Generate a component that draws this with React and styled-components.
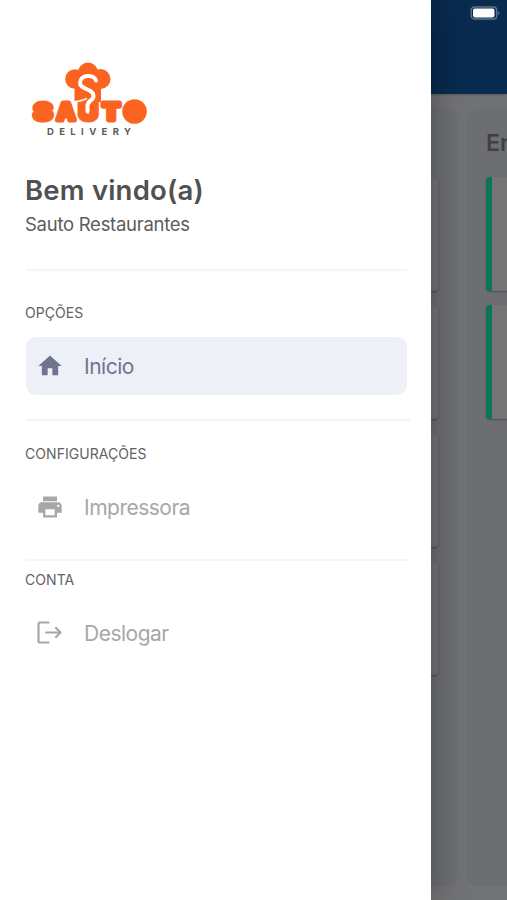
import React from "react";
import styled, { createGlobalStyle } from "styled-components";

const GlobalStyle = createGlobalStyle`
  * {
    box-sizing: border-box;
  }
  body {
    margin: 0;
    font-family: Inter, "Liberation Sans", sans-serif;
  }
`;

const ScreenStyles = styled.div`
  position: relative;
  display: flex;
  flex-direction: column;
  width: 507px;
  height: 900px;
  overflow: hidden;
  background-color: #717273;
`;

const BoardHeader = styled.header`
  display: flex;
  justify-content: flex-end;
  flex-shrink: 0;
  height: 94px;
  padding: 6px 7px;
  background-color: #082b4f;
  box-shadow: 0 1px 2px rgba(0, 0, 0, 0.2);
`;

const BoardStyles = styled.main`
  display: flex;
  flex: 1;
  gap: 10px;
  padding: 14px 0 14px 17px;
`;

const Column = styled.section`
  display: flex;
  flex-direction: column;
  flex-shrink: 0;
  gap: 13px;
  width: 440px;
  padding: 0 19px;
  border-radius: 10px;
  background-color: #6c6e72;
`;

const ColumnTitle = styled.h2`
  height: 41px;
  margin: 15px 0 0;
  font-size: 23px;
  line-height: 41px;
  font-weight: 600;
  color: #3f3f48;
`;

const CardList = styled.div`
  display: flex;
  flex-direction: column;
  gap: 14px;
`;

const Card = styled.article`
  height: 114px;
  border-left: 6px solid #0b7557;
  border-radius: 4px;
  background-color: #747474;
  box-shadow: 0 1px 2px rgba(0, 0, 0, 0.3);
`;

const DrawerStyles = styled.aside`
  position: absolute;
  top: 0;
  left: 0;
  width: 431px;
  height: 100%;
  padding: 50px 24px 0 26px;
  background-color: #fff;
  box-shadow: 0 0 32px rgba(0, 0, 0, 0.34);
  .logo {
    display: block;
    margin-left: -6px;
  }
`;

const Welcome = styled.h1`
  margin: 29px 0 0 -1px;
  font-size: 27.5px;
  line-height: 32px;
  font-weight: 600;
  letter-spacing: 0.2px;
  color: #515151;
`;

const Restaurant = styled.p`
  margin: 6px 0 0 -1px;
  font-size: 18.5px;
  line-height: 24px;
  letter-spacing: -0.27px;
  color: #5c5c5c;
`;

const MenuGroup = styled.section`
  width: ${(props) => props.$width || "381px"};
  margin-top: ${(props) => props.$top};
  padding-top: ${(props) => props.$inner};
  border-top: 2px solid #f5f5f6;
`;

const GroupTitle = styled.h3`
  margin: 0 0 0 -1px;
  font-size: 14px;
  line-height: 20px;
  font-weight: 400;
  letter-spacing: 0.05px;
  color: #626262;
`;

const MenuItem = styled.a`
  display: flex;
  align-items: center;
  gap: 20px;
  width: 381px;
  height: 58px;
  margin-top: 14px;
  padding-left: 10px;
  border-radius: 10px;
  font-size: 21px;
  letter-spacing: -0.5px;
  color: ${(props) => (props.$active ? "#70758e" : "#a7a7a7")};
  background-color: ${(props) => (props.$active ? "#eef0f7" : "transparent")};
  svg {
    flex-shrink: 0;
  }
`;

const letters = [
  { char: "S", x: 14, width: 18 },
  { char: "A", x: 37, width: 18 },
  { char: "U", x: 59, width: 18.5 },
  { char: "T", x: 82.5, width: 17.5 },
  { char: "O", x: 106, width: 17 },
];

const Logo = () => (
  <svg className="logo" width="140" height="95" viewBox="0 0 140 95">
    <g fill="#fb6420">
      <circle cx="68" cy="22.5" r="10" />
      <circle cx="55" cy="29" r="9.8" />
      <circle cx="80.5" cy="29" r="10" />
      <path d="M54.5 30H81V52H54.5Z" />
    </g>
    <g
      fill="#fb6420"
      stroke="#fb6420"
      strokeWidth="5"
      strokeLinejoin="round"
      fontFamily="Inter, sans-serif"
      fontWeight="800"
      fontSize="22.5"
    >
      {letters.map(({ char, x, width }) => (
        <text key={char} x={x} y="70.3" textLength={width} lengthAdjust="spacingAndGlyphs">
          {char}
        </text>
      ))}
    </g>
    <circle cx="114.5" cy="61.5" r="12.3" fill="#fb6420" />
    <path
      d="M76 30.5C74 24 60 24 60 33C60 40 73.5 38 73.5 46C73.5 51 67.5 50 67.5 56V61.5"
      fill="none"
      stroke="#fff"
      strokeWidth="4"
      strokeLinecap="round"
    />
    <path d="M54.5 51.5C59 52 63 50 67 48.5" fill="none" stroke="#fff" strokeWidth="1.6" />
    <text
      x="27"
      y="85"
      textLength="84"
      fontFamily="Inter, sans-serif"
      fontSize="9.5"
      fontWeight="700"
      fill="#5c5c5c"
    >
      DELIVERY
    </text>
  </svg>
);

const HomeIcon = () => (
  <svg width="28" height="28" viewBox="0 0 24 24" fill="currentColor">
    <path d="M10 20v-6h4v6h5v-8h3L12 3 2 12h3v8z" />
  </svg>
);

const PrinterIcon = () => (
  <svg width="28" height="28" viewBox="0 0 24 24" fill="currentColor">
    <path d="M19 8H5c-1.66 0-3 1.34-3 3v6h4v4h12v-4h4v-6c0-1.66-1.34-3-3-3zm-3 11H8v-5h8v5zm3-7c-.55 0-1-.45-1-1s.45-1 1-1 1 .45 1 1-.45 1-1 1zm-1-9H6v4h12V3z" />
  </svg>
);

const LogoutIcon = () => (
  <svg
    width="28"
    height="28"
    viewBox="0 0 28 28"
    fill="none"
    stroke="currentColor"
    strokeWidth="2.2"
    strokeLinecap="round"
    strokeLinejoin="round"
  >
    <path d="M12.5 3.5H4Q2.5 3.5 2.5 5V22Q2.5 23.5 4 23.5H12.5" />
    <path d="M10 13.5H24.5M20 9L24.5 13.5L20 18" />
  </svg>
);

const BatteryIcon = () => (
  <svg width="30" height="15" viewBox="0 0 30 15">
    <rect x="1.2" y="1" width="25.5" height="12" rx="3.2" fill="none" stroke="#5d7689" strokeWidth="1.4" />
    <rect x="3" y="2.6" width="21.5" height="8.8" rx="1.8" fill="#fff" />
    <path d="M28 5.3Q31 7 28 8.9Z" fill="#5d7689" />
  </svg>
);

const Board = ({ columns }) => (
  <BoardStyles>
    {columns.map((column) => (
      <Column key={column.title}>
        <ColumnTitle>{column.title}</ColumnTitle>
        <CardList>
          {column.cards.map((id) => (
            <Card key={id} />
          ))}
        </CardList>
      </Column>
    ))}
  </BoardStyles>
);

const Drawer = () => (
  <DrawerStyles>
    <Logo />
    <Welcome>Bem vindo(a)</Welcome>
    <Restaurant>Sauto Restaurantes</Restaurant>
    <MenuGroup $top="33px" $inner="32px">
      <GroupTitle>OPÇÕES</GroupTitle>
      <MenuItem $active>
        <HomeIcon />
        Início
      </MenuItem>
    </MenuGroup>
    <MenuGroup $top="24px" $inner="23px" $width="384px">
      <GroupTitle>CONFIGURAÇÕES</GroupTitle>
      <MenuItem>
        <PrinterIcon />
        Impressora
      </MenuItem>
    </MenuGroup>
    <MenuGroup $top="23px" $inner="9px">
      <GroupTitle>CONTA</GroupTitle>
      <MenuItem>
        <LogoutIcon />
        Deslogar
      </MenuItem>
    </MenuGroup>
  </DrawerStyles>
);

const columns = [
  { title: "Novos", cards: [1, 2, 3, 4] },
  { title: "Entregas", cards: [5, 6] },
];

const App = () => {
  return (
    <>
      <GlobalStyle />
      <ScreenStyles>
        <BoardHeader>
          <BatteryIcon />
        </BoardHeader>
        <Board columns={columns} />
        <Drawer />
      </ScreenStyles>
    </>
  );
};

export default App;
